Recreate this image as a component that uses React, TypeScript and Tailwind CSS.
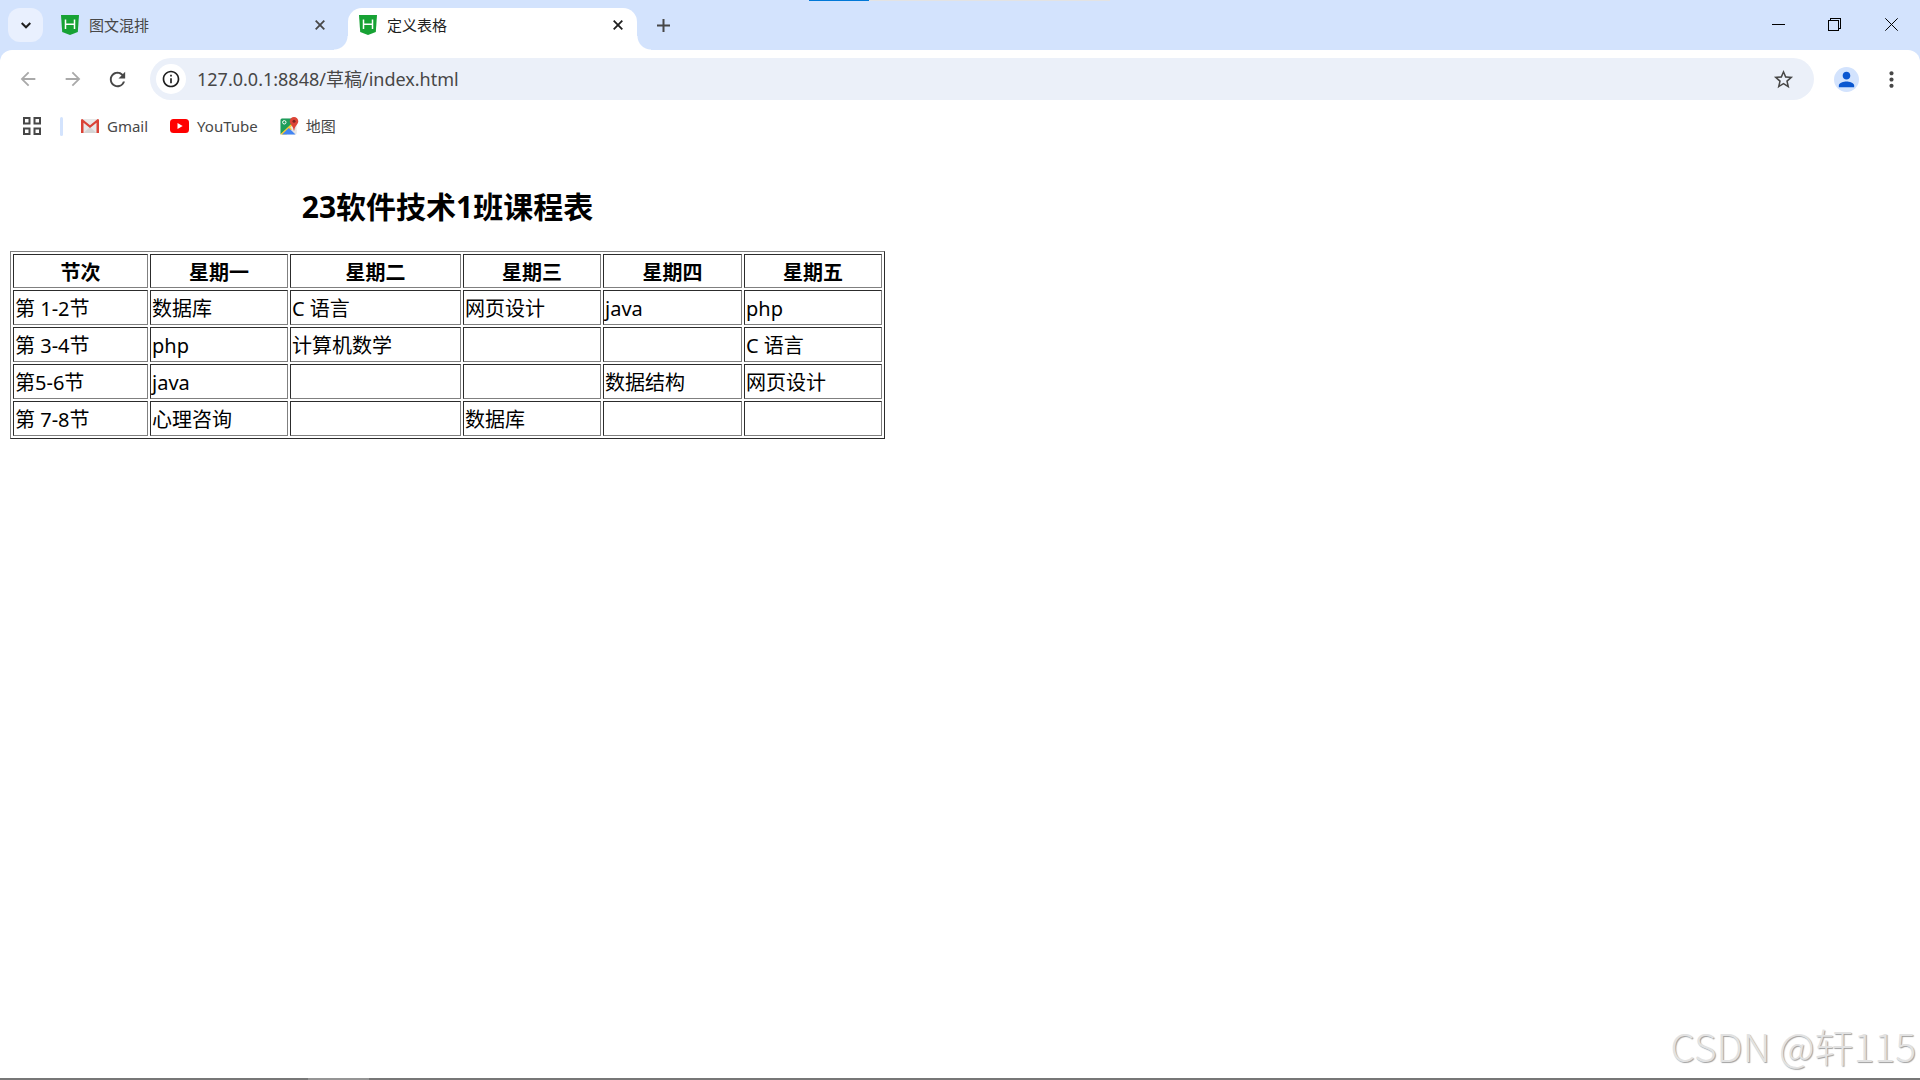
import React, { useState } from 'react';
import { MdArrowBack, MdArrowForward, MdInfoOutline, MdMoreVert, MdPerson, MdRefresh, MdStarBorder } from 'react-icons/md';

const TABS = [
  { id: 'mix', title: '图文混排' },
  { id: 'table', title: '定义表格' },
];

const DAYS = [
  { label: '节次', width: 'w-[135px]' },
  { label: '星期一', width: 'w-[138px]' },
  { label: '星期二', width: 'w-[171px]' },
  { label: '星期三', width: 'w-[138px]' },
  { label: '星期四', width: 'w-[139px]' },
  { label: '星期五', width: 'w-[138px]' },
];

const LESSONS = [
  ['第 1-2节', '数据库', 'C 语言', '网页设计', 'java', 'php'],
  ['第 3-4节', 'php', '计算机数学', '', '', 'C 语言'],
  ['第5-6节', 'java', '', '', '数据结构', '网页设计'],
  ['第 7-8节', '心理咨询', '', '数据库', '', ''],
];

const cellStyle = 'border border-t-[#2c2c2c] border-l-[#2c2c2c] border-r-[#808080] border-b-[#808080] px-px pt-[3px] pb-0';

function HBuilderIcon() {
  return (
    <svg className="w-[18px] h-5 shrink-0" viewBox="0 0 18 20">
      <path d="M0 0h18l-1.2 17L9 20l-7.800-3z" fill="#17a234" />
      <path d="M4.500 4.500v9.500M13.500 4.500v9.500M4.500 9.200h9" stroke="#fff" strokeWidth="1.500" fill="none" />
    </svg>
  );
}

function GmailIcon() {
  return (
    <svg className="w-[18px] h-[14px]" viewBox="0 0 18 14">
      <path d="M1 0h16v14H1z" fill="#e8e8e8" />
      <path d="M2.500 14 9 8l6.500 6z" fill="#d4d4d4" />
      <path d="M0 1.300C0 .6.5 0 1.300 0L9 6.200 16.700 0c.8 0 1.300.6 1.300 1.300V14h-2.500V3.800L9 9 2.500 3.800V14H0z" fill="#da4336" />
    </svg>
  );
}

function YouTubeIcon() {
  return (
    <svg className="w-[19px] h-[14px]" viewBox="0 0 19 14">
      <rect width="19" height="14" rx="3.500" fill="#f00" />
      <path d="M7.500 4v6l5.200-3z" fill="#fff" />
    </svg>
  );
}

function MapsIcon() {
  return (
    <svg className="w-[19px] h-[18px]" viewBox="0 0 19 18">
      <rect x="0.500" y="1.500" width="16" height="16" rx="1.500" fill="#e3e3e3" />
      <path d="M2 1.500h10v6.500L.5 17.500V3A1.500 1.500 0 0 1 2 1.500z" fill="#1e9d5b" />
      <path d="M.5 17 12 6.200l3 3L6.500 17.500H1z" fill="#fcc934" />
      <path d="M2 17.500 8.800 11l6.700 6.500z" fill="#4285f4" />
      <path d="M10.200 10.400l1.800-1.700 4.500 4.500v3.500z" fill="#e8e8e8" />
      <circle cx="4.300" cy="5.300" r="1.700" stroke="#fff" strokeWidth="1" fill="none" />
      <path d="M14 0a4.300 4.300 0 0 1 4.300 4.300c0 3.200-3.500 4.200-4 9.200h-.6c-.5-5-4-6-4-9.200A4.300 4.300 0 0 1 14 0z" fill="#dc4437" />
      <circle cx="14" cy="4.300" r="1.500" fill="#7c231c" />
    </svg>
  );
}

function CloseIcon() {
  return (
    <svg className="w-[10px] h-[10px]" viewBox="0 0 10 10" stroke="currentColor" strokeWidth="1.800">
      <path d="M.7.7l8.600 8.600M9.300.7.700 9.300" />
    </svg>
  );
}

function TabStrip() {
  const [active, setActive] = useState('table');

  return (
    <header className="relative flex h-[50px] items-stretch bg-[#d3e3fd]">
      {/* Loading bar */}
      <div className="absolute left-[809px] top-0 flex h-px w-[301px] bg-[#e3e3e3]">
        <div className="w-[60px] bg-[#0078d7]" />
      </div>

      <button aria-label="搜索标签页" className="ml-2 mt-2 flex h-[34px] w-[35px] items-center justify-center rounded-xl bg-[#e9f0fe] text-[#1f1f1f]">
        <svg className="w-[10px] h-[7px]" viewBox="0 0 10 7" fill="none" stroke="currentColor" strokeWidth="2">
          <path d="M.7 1 5 5.300 9.300 1" />
        </svg>
      </button>

      <div className="ml-[7px] mt-2 flex gap-[9px]">
        {TABS.map(tab => {
          const isActive = tab.id === active;
          return (
            <div
              key={tab.id}
              className={`relative flex w-[289px] items-center pb-2 pl-[11px] pr-[14px] ${isActive ? 'rounded-t-[14px] bg-white text-[#1f1f1f]' : 'text-[#474747]'}`}
            >
              {isActive && (
                <>
                  <span className="absolute bottom-0 -left-[14px] h-[14px] w-[14px] bg-[radial-gradient(circle_at_0_0,transparent_13px,white_14px)]" />
                  <span className="absolute bottom-0 -right-[14px] h-[14px] w-[14px] bg-[radial-gradient(circle_at_100%_0,transparent_13px,white_14px)]" />
                </>
              )}
              <HBuilderIcon />
              <button onClick={() => setActive(tab.id)} className="ml-[10px] flex-1 text-left text-[15px] leading-5">
                {tab.title}
              </button>
              <button aria-label="关闭标签页">
                <CloseIcon />
              </button>
            </div>
          );
        })}
      </div>

      <button aria-label="新标签页" className="ml-[10px] flex w-8 items-center justify-center text-[#474747]">
        <svg className="w-[13px] h-[13px]" viewBox="0 0 13 13" stroke="currentColor" strokeWidth="2">
          <path d="M6.500 0v13M0 6.500h13" />
        </svg>
      </button>

      {/* Window controls */}
      <div className="ml-auto flex pb-px text-black">
        <button aria-label="最小化" className="flex w-14 items-center justify-center">
          <svg className="w-[13px] h-[13px]" viewBox="0 0 13 13" stroke="currentColor" shapeRendering="crispEdges">
            <path d="M0 6.500h13" />
          </svg>
        </button>
        <button aria-label="还原" className="flex w-14 items-center justify-center">
          <svg className="w-[13px] h-[13px]" viewBox="0 0 13 13" fill="none" stroke="currentColor" shapeRendering="crispEdges">
            <path d="M.5 2.500h10v10H.5zM2.500 2.500v-2h10v10h-2" />
          </svg>
        </button>
        <button aria-label="关闭" className="flex w-[58px] items-center justify-center">
          <svg className="w-[13px] h-[13px]" viewBox="0 0 13 13" stroke="currentColor">
            <path d="M.3.3l12.400 12.400M12.700.3.300 12.700" />
          </svg>
        </button>
      </div>
    </header>
  );
}

function Toolbar() {
  const [url, setUrl] = useState('127.0.0.1:8848/草稿/index.html');

  return (
    <div className="bg-[#d3e3fd]">
      <div className="flex h-[58px] items-center rounded-t-[12px] bg-white text-[#474747]">
        <button aria-label="后退" className="ml-[17px] text-[#a9a9a9]"><MdArrowBack size={22} /></button>
        <button aria-label="前进" className="ml-[23px] text-[#a9a9a9]"><MdArrowForward size={22} /></button>
        <button aria-label="重新加载" className="ml-[22px]"><MdRefresh size={23} /></button>

        <div className="ml-[21px] flex h-[42px] flex-1 items-center rounded-full bg-[#ebf0f9] pl-[6px] pr-[19px]">
          <button aria-label="查看网站信息" className="flex h-[30px] w-[30px] items-center justify-center rounded-full bg-white text-[#1f1f1f]">
            <MdInfoOutline size={20} />
          </button>
          <input
            aria-label="地址栏"
            value={url}
            onChange={e => setUrl(e.target.value)}
            className="ml-[11px] flex-1 bg-transparent text-[18px] leading-6 outline-none"
          />
          <button aria-label="添加书签"><MdStarBorder size={23} /></button>
        </div>

        <button aria-label="个人资料" className="ml-5 flex h-[25px] w-[25px] items-center justify-center rounded-full bg-[#d3e3fd] text-[#0b57d0]">
          <MdPerson size={23} />
        </button>
        <button aria-label="菜单" className="ml-5 mr-4"><MdMoreVert size={25} /></button>
      </div>
    </div>
  );
}

function BookmarksBar() {
  return (
    <nav className="flex h-9 items-center bg-white text-[15px] leading-5 text-[#474747]">
      <button aria-label="应用" className="ml-[23px]">
        <svg className="w-[18px] h-[18px]" viewBox="0 0 18 18" fill="none" stroke="currentColor" strokeWidth="2">
          <path d="M1 1h5.500v5.500H1zM11.500 1H17v5.500h-5.500zM1 11.500h5.500V17H1zM11.500 11.500H17V17h-5.500z" />
        </svg>
      </button>
      <span className="ml-[19px] h-[19px] w-[3px] rounded-full bg-[#d3e3fd]" />
      <a href="#gmail" className="ml-[18px] flex items-center gap-2"><GmailIcon />Gmail</a>
      <a href="#youtube" className="ml-[22px] flex items-center gap-2"><YouTubeIcon />YouTube</a>
      <a href="#maps" className="ml-[22px] flex items-center gap-[7px]"><MapsIcon />地图</a>
    </nav>
  );
}

function Timetable() {
  return (
    <main className="flex-1 bg-white px-[10px] pt-[43px] text-black">
      <div className="w-[875px]">
        <h2 id="timetable-title" className="mb-6 text-center text-[30px] font-bold leading-10">23软件技术1班课程表</h2>
        <table
          aria-labelledby="timetable-title"
          className="w-full table-fixed border-separate border-spacing-[2px] border border-t-[#808080] border-l-[#808080] border-r-[#2c2c2c] border-b-[#2c2c2c] text-[20px] leading-7"
        >
          <thead>
            <tr className="h-[34px]">
              {DAYS.map(day => (
                <th key={day.label} className={`${cellStyle} ${day.width} font-bold`}>{day.label}</th>
              ))}
            </tr>
          </thead>
          <tbody>
            {LESSONS.map(row => (
              <tr key={row[0]} className="h-[35px]">
                {row.map((lesson, i) => (
                  <td key={i} className={cellStyle}>{lesson}</td>
                ))}
              </tr>
            ))}
          </tbody>
        </table>
      </div>
    </main>
  );
}

export default function App() {
  return (
    <div className="relative flex min-h-screen flex-col bg-white font-['Noto_Sans','Noto_Sans_CJK_SC',sans-serif]">
      <TabStrip />
      <Toolbar />
      <BookmarksBar />
      <Timetable />

      <footer className="h-[2px] bg-[#777777]">
        <div className="ml-[308px] h-[2px] w-[61px] bg-[#959595]" />
      </footer>

      {/* Watermark */}
      <div className="pointer-events-none absolute bottom-[11px] right-1 font-['Noto_Sans_CJK_SC',sans-serif] text-[39px] font-light leading-[48px] text-[#e2e2e2] [text-shadow:1px_1px_1px_#a0a0a0]">
        CSDN @轩115
      </div>
    </div>
  );
}
